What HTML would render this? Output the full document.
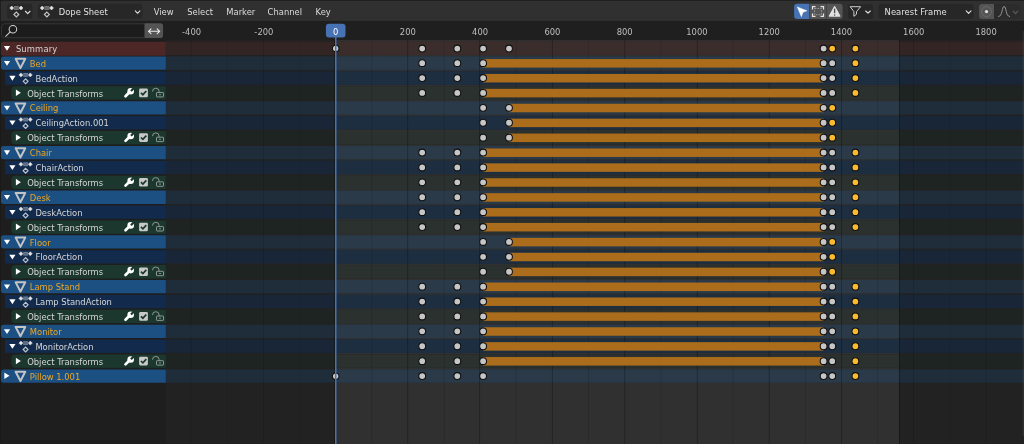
<!DOCTYPE html>
<html lang="en"><head><meta charset="utf-8"><title>Dope Sheet</title>
<style>html,body{margin:0;padding:0;background:#222;overflow:hidden}svg{display:block;will-change:transform}text{white-space:pre}</style></head>
<body>
<svg width="1024" height="444" viewBox="0 0 1024 444" font-family='"DejaVu Sans","Liberation Sans",sans-serif'>
<rect x="0.00" y="0.00" width="1024.00" height="444.00" fill="#222222" />
<rect x="335.60" y="40.00" width="563.40" height="404.00" fill="#303030" />
<rect x="0.00" y="40.00" width="165.80" height="404.00" fill="#1e1e1e" />
<rect x="165.80" y="41.60" width="858.20" height="13.30" fill="#342525" />
<rect x="335.60" y="41.60" width="563.40" height="13.30" fill="#3c2d2d" />
<rect x="165.80" y="56.50" width="858.20" height="13.30" fill="#1f2d3b" />
<rect x="335.60" y="56.50" width="563.40" height="13.30" fill="#2a3a49" />
<rect x="165.80" y="71.40" width="858.20" height="13.30" fill="#182638" />
<rect x="335.60" y="71.40" width="563.40" height="13.30" fill="#1e2e41" />
<rect x="165.80" y="86.30" width="858.20" height="13.30" fill="#1e2422" />
<rect x="335.60" y="86.30" width="563.40" height="13.30" fill="#2b312f" />
<rect x="165.80" y="101.20" width="858.20" height="13.30" fill="#1f2d3b" />
<rect x="335.60" y="101.20" width="563.40" height="13.30" fill="#2a3a49" />
<rect x="165.80" y="116.10" width="858.20" height="13.30" fill="#182638" />
<rect x="335.60" y="116.10" width="563.40" height="13.30" fill="#1e2e41" />
<rect x="165.80" y="131.00" width="858.20" height="13.30" fill="#1e2422" />
<rect x="335.60" y="131.00" width="563.40" height="13.30" fill="#2b312f" />
<rect x="165.80" y="145.90" width="858.20" height="13.30" fill="#1f2d3b" />
<rect x="335.60" y="145.90" width="563.40" height="13.30" fill="#2a3a49" />
<rect x="165.80" y="160.80" width="858.20" height="13.30" fill="#182638" />
<rect x="335.60" y="160.80" width="563.40" height="13.30" fill="#1e2e41" />
<rect x="165.80" y="175.70" width="858.20" height="13.30" fill="#1e2422" />
<rect x="335.60" y="175.70" width="563.40" height="13.30" fill="#2b312f" />
<rect x="165.80" y="190.60" width="858.20" height="13.30" fill="#1f2d3b" />
<rect x="335.60" y="190.60" width="563.40" height="13.30" fill="#2a3a49" />
<rect x="165.80" y="205.50" width="858.20" height="13.30" fill="#182638" />
<rect x="335.60" y="205.50" width="563.40" height="13.30" fill="#1e2e41" />
<rect x="165.80" y="220.40" width="858.20" height="13.30" fill="#1e2422" />
<rect x="335.60" y="220.40" width="563.40" height="13.30" fill="#2b312f" />
<rect x="165.80" y="235.30" width="858.20" height="13.30" fill="#1f2d3b" />
<rect x="335.60" y="235.30" width="563.40" height="13.30" fill="#2a3a49" />
<rect x="165.80" y="250.20" width="858.20" height="13.30" fill="#182638" />
<rect x="335.60" y="250.20" width="563.40" height="13.30" fill="#1e2e41" />
<rect x="165.80" y="265.10" width="858.20" height="13.30" fill="#1e2422" />
<rect x="335.60" y="265.10" width="563.40" height="13.30" fill="#2b312f" />
<rect x="165.80" y="280.00" width="858.20" height="13.30" fill="#1f2d3b" />
<rect x="335.60" y="280.00" width="563.40" height="13.30" fill="#2a3a49" />
<rect x="165.80" y="294.90" width="858.20" height="13.30" fill="#182638" />
<rect x="335.60" y="294.90" width="563.40" height="13.30" fill="#1e2e41" />
<rect x="165.80" y="309.80" width="858.20" height="13.30" fill="#1e2422" />
<rect x="335.60" y="309.80" width="563.40" height="13.30" fill="#2b312f" />
<rect x="165.80" y="324.70" width="858.20" height="13.30" fill="#1f2d3b" />
<rect x="335.60" y="324.70" width="563.40" height="13.30" fill="#2a3a49" />
<rect x="165.80" y="339.60" width="858.20" height="13.30" fill="#182638" />
<rect x="335.60" y="339.60" width="563.40" height="13.30" fill="#1e2e41" />
<rect x="165.80" y="354.50" width="858.20" height="13.30" fill="#1e2422" />
<rect x="335.60" y="354.50" width="563.40" height="13.30" fill="#2b312f" />
<rect x="165.80" y="369.40" width="858.20" height="13.30" fill="#1f2d3b" />
<rect x="335.60" y="369.40" width="563.40" height="13.30" fill="#2a3a49" />
<line x1="334.5" y1="40.0" x2="334.5" y2="444" stroke="#000" stroke-opacity="0.3" stroke-width="1"/>
<line x1="191.00" y1="40.0" x2="191.00" y2="444" stroke="#000" stroke-opacity="0.12150000000000001" stroke-width="1"/>
<line x1="227.30" y1="40.0" x2="227.30" y2="444" stroke="#000" stroke-opacity="0.0495" stroke-width="1"/>
<line x1="263.60" y1="40.0" x2="263.60" y2="444" stroke="#000" stroke-opacity="0.12150000000000001" stroke-width="1"/>
<line x1="299.60" y1="40.0" x2="299.60" y2="444" stroke="#000" stroke-opacity="0.0495" stroke-width="1"/>
<line x1="371.70" y1="40.0" x2="371.70" y2="444" stroke="#000" stroke-opacity="0.11" stroke-width="1"/>
<line x1="407.70" y1="40.0" x2="407.70" y2="444" stroke="#000" stroke-opacity="0.27" stroke-width="1"/>
<line x1="444.30" y1="40.0" x2="444.30" y2="444" stroke="#000" stroke-opacity="0.11" stroke-width="1"/>
<line x1="479.60" y1="40.0" x2="479.60" y2="444" stroke="#000" stroke-opacity="0.27" stroke-width="1"/>
<line x1="516.25" y1="40.0" x2="516.25" y2="444" stroke="#000" stroke-opacity="0.11" stroke-width="1"/>
<line x1="552.39" y1="40.0" x2="552.39" y2="444" stroke="#000" stroke-opacity="0.27" stroke-width="1"/>
<line x1="588.53" y1="40.0" x2="588.53" y2="444" stroke="#000" stroke-opacity="0.11" stroke-width="1"/>
<line x1="624.67" y1="40.0" x2="624.67" y2="444" stroke="#000" stroke-opacity="0.27" stroke-width="1"/>
<line x1="660.81" y1="40.0" x2="660.81" y2="444" stroke="#000" stroke-opacity="0.11" stroke-width="1"/>
<line x1="697.40" y1="40.0" x2="697.40" y2="444" stroke="#000" stroke-opacity="0.27" stroke-width="1"/>
<line x1="733.09" y1="40.0" x2="733.09" y2="444" stroke="#000" stroke-opacity="0.11" stroke-width="1"/>
<line x1="769.23" y1="40.0" x2="769.23" y2="444" stroke="#000" stroke-opacity="0.27" stroke-width="1"/>
<line x1="805.37" y1="40.0" x2="805.37" y2="444" stroke="#000" stroke-opacity="0.11" stroke-width="1"/>
<line x1="841.50" y1="40.0" x2="841.50" y2="444" stroke="#000" stroke-opacity="0.27" stroke-width="1"/>
<line x1="877.64" y1="40.0" x2="877.64" y2="444" stroke="#000" stroke-opacity="0.11" stroke-width="1"/>
<line x1="913.50" y1="40.0" x2="913.50" y2="444" stroke="#000" stroke-opacity="0.12150000000000001" stroke-width="1"/>
<line x1="949.92" y1="40.0" x2="949.92" y2="444" stroke="#000" stroke-opacity="0.0495" stroke-width="1"/>
<line x1="986.06" y1="40.0" x2="986.06" y2="444" stroke="#000" stroke-opacity="0.12150000000000001" stroke-width="1"/>
<line x1="1022.20" y1="40.0" x2="1022.20" y2="444" stroke="#000" stroke-opacity="0.0495" stroke-width="1"/>
<line x1="899.5" y1="40.0" x2="899.5" y2="444" stroke="#000" stroke-opacity="0.32" stroke-width="1"/>
<circle cx="335.70" cy="48.45" r="3.25" fill="#c6c6c6" stroke="#0f0f0f" stroke-width="1.05"/>
<circle cx="422.20" cy="48.55" r="3.42" fill="#c6c6c6" stroke="#0f0f0f" stroke-width="1.05"/>
<circle cx="457.30" cy="48.55" r="3.42" fill="#c6c6c6" stroke="#0f0f0f" stroke-width="1.05"/>
<circle cx="483.10" cy="48.55" r="3.42" fill="#c6c6c6" stroke="#0f0f0f" stroke-width="1.05"/>
<circle cx="509.00" cy="48.55" r="3.42" fill="#c6c6c6" stroke="#0f0f0f" stroke-width="1.05"/>
<circle cx="823.60" cy="48.55" r="3.42" fill="#c6c6c6" stroke="#0f0f0f" stroke-width="1.05"/>
<circle cx="832.25" cy="48.55" r="3.42" fill="#fbbb2f" stroke="#0f0f0f" stroke-width="1.05"/>
<circle cx="855.40" cy="48.55" r="3.42" fill="#fbbb2f" stroke="#0f0f0f" stroke-width="1.05"/>
<rect x="483.10" y="59.05" width="340.50" height="8.50" fill="#ab6d1b" />
<circle cx="422.20" cy="63.15" r="3.42" fill="#c6c6c6" stroke="#0f0f0f" stroke-width="1.05"/>
<circle cx="457.30" cy="63.15" r="3.42" fill="#c6c6c6" stroke="#0f0f0f" stroke-width="1.05"/>
<circle cx="483.10" cy="63.15" r="3.42" fill="#c6c6c6" stroke="#0f0f0f" stroke-width="1.05"/>
<circle cx="823.60" cy="63.15" r="3.42" fill="#c6c6c6" stroke="#0f0f0f" stroke-width="1.05"/>
<circle cx="832.25" cy="63.15" r="3.42" fill="#c6c6c6" stroke="#0f0f0f" stroke-width="1.05"/>
<circle cx="855.40" cy="63.15" r="3.42" fill="#fbbb2f" stroke="#0f0f0f" stroke-width="1.05"/>
<rect x="483.10" y="73.95" width="340.50" height="8.50" fill="#ab6d1b" />
<circle cx="422.20" cy="78.05" r="3.42" fill="#c6c6c6" stroke="#0f0f0f" stroke-width="1.05"/>
<circle cx="457.30" cy="78.05" r="3.42" fill="#c6c6c6" stroke="#0f0f0f" stroke-width="1.05"/>
<circle cx="483.10" cy="78.05" r="3.42" fill="#c6c6c6" stroke="#0f0f0f" stroke-width="1.05"/>
<circle cx="823.60" cy="78.05" r="3.42" fill="#c6c6c6" stroke="#0f0f0f" stroke-width="1.05"/>
<circle cx="832.25" cy="78.05" r="3.42" fill="#c6c6c6" stroke="#0f0f0f" stroke-width="1.05"/>
<circle cx="855.40" cy="78.05" r="3.42" fill="#fbbb2f" stroke="#0f0f0f" stroke-width="1.05"/>
<rect x="483.10" y="88.85" width="340.50" height="8.50" fill="#ab6d1b" />
<circle cx="422.20" cy="92.95" r="3.42" fill="#c6c6c6" stroke="#0f0f0f" stroke-width="1.05"/>
<circle cx="457.30" cy="92.95" r="3.42" fill="#c6c6c6" stroke="#0f0f0f" stroke-width="1.05"/>
<circle cx="483.10" cy="92.95" r="3.42" fill="#c6c6c6" stroke="#0f0f0f" stroke-width="1.05"/>
<circle cx="823.60" cy="92.95" r="3.42" fill="#c6c6c6" stroke="#0f0f0f" stroke-width="1.05"/>
<circle cx="832.25" cy="92.95" r="3.42" fill="#c6c6c6" stroke="#0f0f0f" stroke-width="1.05"/>
<circle cx="855.40" cy="92.95" r="3.42" fill="#fbbb2f" stroke="#0f0f0f" stroke-width="1.05"/>
<rect x="509.00" y="103.75" width="314.60" height="8.50" fill="#ab6d1b" />
<circle cx="483.10" cy="107.85" r="3.42" fill="#c6c6c6" stroke="#0f0f0f" stroke-width="1.05"/>
<circle cx="509.00" cy="107.85" r="3.42" fill="#c6c6c6" stroke="#0f0f0f" stroke-width="1.05"/>
<circle cx="823.60" cy="107.85" r="3.42" fill="#c6c6c6" stroke="#0f0f0f" stroke-width="1.05"/>
<circle cx="832.25" cy="107.85" r="3.42" fill="#fbbb2f" stroke="#0f0f0f" stroke-width="1.05"/>
<rect x="509.00" y="118.65" width="314.60" height="8.50" fill="#ab6d1b" />
<circle cx="483.10" cy="122.75" r="3.42" fill="#c6c6c6" stroke="#0f0f0f" stroke-width="1.05"/>
<circle cx="509.00" cy="122.75" r="3.42" fill="#c6c6c6" stroke="#0f0f0f" stroke-width="1.05"/>
<circle cx="823.60" cy="122.75" r="3.42" fill="#c6c6c6" stroke="#0f0f0f" stroke-width="1.05"/>
<circle cx="832.25" cy="122.75" r="3.42" fill="#fbbb2f" stroke="#0f0f0f" stroke-width="1.05"/>
<rect x="509.00" y="133.55" width="314.60" height="8.50" fill="#ab6d1b" />
<circle cx="483.10" cy="137.65" r="3.42" fill="#c6c6c6" stroke="#0f0f0f" stroke-width="1.05"/>
<circle cx="509.00" cy="137.65" r="3.42" fill="#c6c6c6" stroke="#0f0f0f" stroke-width="1.05"/>
<circle cx="823.60" cy="137.65" r="3.42" fill="#c6c6c6" stroke="#0f0f0f" stroke-width="1.05"/>
<circle cx="832.25" cy="137.65" r="3.42" fill="#fbbb2f" stroke="#0f0f0f" stroke-width="1.05"/>
<rect x="483.10" y="148.45" width="340.50" height="8.50" fill="#ab6d1b" />
<circle cx="422.20" cy="152.55" r="3.42" fill="#c6c6c6" stroke="#0f0f0f" stroke-width="1.05"/>
<circle cx="457.30" cy="152.55" r="3.42" fill="#c6c6c6" stroke="#0f0f0f" stroke-width="1.05"/>
<circle cx="483.10" cy="152.55" r="3.42" fill="#c6c6c6" stroke="#0f0f0f" stroke-width="1.05"/>
<circle cx="823.60" cy="152.55" r="3.42" fill="#c6c6c6" stroke="#0f0f0f" stroke-width="1.05"/>
<circle cx="832.25" cy="152.55" r="3.42" fill="#c6c6c6" stroke="#0f0f0f" stroke-width="1.05"/>
<circle cx="855.40" cy="152.55" r="3.42" fill="#fbbb2f" stroke="#0f0f0f" stroke-width="1.05"/>
<rect x="483.10" y="163.35" width="340.50" height="8.50" fill="#ab6d1b" />
<circle cx="422.20" cy="167.45" r="3.42" fill="#c6c6c6" stroke="#0f0f0f" stroke-width="1.05"/>
<circle cx="457.30" cy="167.45" r="3.42" fill="#c6c6c6" stroke="#0f0f0f" stroke-width="1.05"/>
<circle cx="483.10" cy="167.45" r="3.42" fill="#c6c6c6" stroke="#0f0f0f" stroke-width="1.05"/>
<circle cx="823.60" cy="167.45" r="3.42" fill="#c6c6c6" stroke="#0f0f0f" stroke-width="1.05"/>
<circle cx="832.25" cy="167.45" r="3.42" fill="#c6c6c6" stroke="#0f0f0f" stroke-width="1.05"/>
<circle cx="855.40" cy="167.45" r="3.42" fill="#fbbb2f" stroke="#0f0f0f" stroke-width="1.05"/>
<rect x="483.10" y="178.25" width="340.50" height="8.50" fill="#ab6d1b" />
<circle cx="422.20" cy="182.35" r="3.42" fill="#c6c6c6" stroke="#0f0f0f" stroke-width="1.05"/>
<circle cx="457.30" cy="182.35" r="3.42" fill="#c6c6c6" stroke="#0f0f0f" stroke-width="1.05"/>
<circle cx="483.10" cy="182.35" r="3.42" fill="#c6c6c6" stroke="#0f0f0f" stroke-width="1.05"/>
<circle cx="823.60" cy="182.35" r="3.42" fill="#c6c6c6" stroke="#0f0f0f" stroke-width="1.05"/>
<circle cx="832.25" cy="182.35" r="3.42" fill="#c6c6c6" stroke="#0f0f0f" stroke-width="1.05"/>
<circle cx="855.40" cy="182.35" r="3.42" fill="#fbbb2f" stroke="#0f0f0f" stroke-width="1.05"/>
<rect x="483.10" y="193.15" width="340.50" height="8.50" fill="#ab6d1b" />
<circle cx="422.20" cy="197.25" r="3.42" fill="#c6c6c6" stroke="#0f0f0f" stroke-width="1.05"/>
<circle cx="457.30" cy="197.25" r="3.42" fill="#c6c6c6" stroke="#0f0f0f" stroke-width="1.05"/>
<circle cx="483.10" cy="197.25" r="3.42" fill="#c6c6c6" stroke="#0f0f0f" stroke-width="1.05"/>
<circle cx="823.60" cy="197.25" r="3.42" fill="#c6c6c6" stroke="#0f0f0f" stroke-width="1.05"/>
<circle cx="832.25" cy="197.25" r="3.42" fill="#c6c6c6" stroke="#0f0f0f" stroke-width="1.05"/>
<circle cx="855.40" cy="197.25" r="3.42" fill="#fbbb2f" stroke="#0f0f0f" stroke-width="1.05"/>
<rect x="483.10" y="208.05" width="340.50" height="8.50" fill="#ab6d1b" />
<circle cx="422.20" cy="212.15" r="3.42" fill="#c6c6c6" stroke="#0f0f0f" stroke-width="1.05"/>
<circle cx="457.30" cy="212.15" r="3.42" fill="#c6c6c6" stroke="#0f0f0f" stroke-width="1.05"/>
<circle cx="483.10" cy="212.15" r="3.42" fill="#c6c6c6" stroke="#0f0f0f" stroke-width="1.05"/>
<circle cx="823.60" cy="212.15" r="3.42" fill="#c6c6c6" stroke="#0f0f0f" stroke-width="1.05"/>
<circle cx="832.25" cy="212.15" r="3.42" fill="#c6c6c6" stroke="#0f0f0f" stroke-width="1.05"/>
<circle cx="855.40" cy="212.15" r="3.42" fill="#fbbb2f" stroke="#0f0f0f" stroke-width="1.05"/>
<rect x="483.10" y="222.95" width="340.50" height="8.50" fill="#ab6d1b" />
<circle cx="422.20" cy="227.05" r="3.42" fill="#c6c6c6" stroke="#0f0f0f" stroke-width="1.05"/>
<circle cx="457.30" cy="227.05" r="3.42" fill="#c6c6c6" stroke="#0f0f0f" stroke-width="1.05"/>
<circle cx="483.10" cy="227.05" r="3.42" fill="#c6c6c6" stroke="#0f0f0f" stroke-width="1.05"/>
<circle cx="823.60" cy="227.05" r="3.42" fill="#c6c6c6" stroke="#0f0f0f" stroke-width="1.05"/>
<circle cx="832.25" cy="227.05" r="3.42" fill="#c6c6c6" stroke="#0f0f0f" stroke-width="1.05"/>
<circle cx="855.40" cy="227.05" r="3.42" fill="#fbbb2f" stroke="#0f0f0f" stroke-width="1.05"/>
<rect x="509.00" y="237.85" width="314.60" height="8.50" fill="#ab6d1b" />
<circle cx="483.10" cy="241.95" r="3.42" fill="#c6c6c6" stroke="#0f0f0f" stroke-width="1.05"/>
<circle cx="509.00" cy="241.95" r="3.42" fill="#c6c6c6" stroke="#0f0f0f" stroke-width="1.05"/>
<circle cx="823.60" cy="241.95" r="3.42" fill="#c6c6c6" stroke="#0f0f0f" stroke-width="1.05"/>
<circle cx="832.25" cy="241.95" r="3.42" fill="#fbbb2f" stroke="#0f0f0f" stroke-width="1.05"/>
<rect x="509.00" y="252.75" width="314.60" height="8.50" fill="#ab6d1b" />
<circle cx="483.10" cy="256.85" r="3.42" fill="#c6c6c6" stroke="#0f0f0f" stroke-width="1.05"/>
<circle cx="509.00" cy="256.85" r="3.42" fill="#c6c6c6" stroke="#0f0f0f" stroke-width="1.05"/>
<circle cx="823.60" cy="256.85" r="3.42" fill="#c6c6c6" stroke="#0f0f0f" stroke-width="1.05"/>
<circle cx="832.25" cy="256.85" r="3.42" fill="#fbbb2f" stroke="#0f0f0f" stroke-width="1.05"/>
<rect x="509.00" y="267.65" width="314.60" height="8.50" fill="#ab6d1b" />
<circle cx="483.10" cy="271.75" r="3.42" fill="#c6c6c6" stroke="#0f0f0f" stroke-width="1.05"/>
<circle cx="509.00" cy="271.75" r="3.42" fill="#c6c6c6" stroke="#0f0f0f" stroke-width="1.05"/>
<circle cx="823.60" cy="271.75" r="3.42" fill="#c6c6c6" stroke="#0f0f0f" stroke-width="1.05"/>
<circle cx="832.25" cy="271.75" r="3.42" fill="#fbbb2f" stroke="#0f0f0f" stroke-width="1.05"/>
<rect x="483.10" y="282.55" width="340.50" height="8.50" fill="#ab6d1b" />
<circle cx="422.20" cy="286.65" r="3.42" fill="#c6c6c6" stroke="#0f0f0f" stroke-width="1.05"/>
<circle cx="457.30" cy="286.65" r="3.42" fill="#c6c6c6" stroke="#0f0f0f" stroke-width="1.05"/>
<circle cx="483.10" cy="286.65" r="3.42" fill="#c6c6c6" stroke="#0f0f0f" stroke-width="1.05"/>
<circle cx="823.60" cy="286.65" r="3.42" fill="#c6c6c6" stroke="#0f0f0f" stroke-width="1.05"/>
<circle cx="832.25" cy="286.65" r="3.42" fill="#c6c6c6" stroke="#0f0f0f" stroke-width="1.05"/>
<circle cx="855.40" cy="286.65" r="3.42" fill="#fbbb2f" stroke="#0f0f0f" stroke-width="1.05"/>
<rect x="483.10" y="297.45" width="340.50" height="8.50" fill="#ab6d1b" />
<circle cx="422.20" cy="301.55" r="3.42" fill="#c6c6c6" stroke="#0f0f0f" stroke-width="1.05"/>
<circle cx="457.30" cy="301.55" r="3.42" fill="#c6c6c6" stroke="#0f0f0f" stroke-width="1.05"/>
<circle cx="483.10" cy="301.55" r="3.42" fill="#c6c6c6" stroke="#0f0f0f" stroke-width="1.05"/>
<circle cx="823.60" cy="301.55" r="3.42" fill="#c6c6c6" stroke="#0f0f0f" stroke-width="1.05"/>
<circle cx="832.25" cy="301.55" r="3.42" fill="#c6c6c6" stroke="#0f0f0f" stroke-width="1.05"/>
<circle cx="855.40" cy="301.55" r="3.42" fill="#fbbb2f" stroke="#0f0f0f" stroke-width="1.05"/>
<rect x="483.10" y="312.35" width="340.50" height="8.50" fill="#ab6d1b" />
<circle cx="422.20" cy="316.45" r="3.42" fill="#c6c6c6" stroke="#0f0f0f" stroke-width="1.05"/>
<circle cx="457.30" cy="316.45" r="3.42" fill="#c6c6c6" stroke="#0f0f0f" stroke-width="1.05"/>
<circle cx="483.10" cy="316.45" r="3.42" fill="#c6c6c6" stroke="#0f0f0f" stroke-width="1.05"/>
<circle cx="823.60" cy="316.45" r="3.42" fill="#c6c6c6" stroke="#0f0f0f" stroke-width="1.05"/>
<circle cx="832.25" cy="316.45" r="3.42" fill="#c6c6c6" stroke="#0f0f0f" stroke-width="1.05"/>
<circle cx="855.40" cy="316.45" r="3.42" fill="#fbbb2f" stroke="#0f0f0f" stroke-width="1.05"/>
<rect x="483.10" y="327.25" width="340.50" height="8.50" fill="#ab6d1b" />
<circle cx="422.20" cy="331.35" r="3.42" fill="#c6c6c6" stroke="#0f0f0f" stroke-width="1.05"/>
<circle cx="457.30" cy="331.35" r="3.42" fill="#c6c6c6" stroke="#0f0f0f" stroke-width="1.05"/>
<circle cx="483.10" cy="331.35" r="3.42" fill="#c6c6c6" stroke="#0f0f0f" stroke-width="1.05"/>
<circle cx="823.60" cy="331.35" r="3.42" fill="#c6c6c6" stroke="#0f0f0f" stroke-width="1.05"/>
<circle cx="832.25" cy="331.35" r="3.42" fill="#c6c6c6" stroke="#0f0f0f" stroke-width="1.05"/>
<circle cx="855.40" cy="331.35" r="3.42" fill="#fbbb2f" stroke="#0f0f0f" stroke-width="1.05"/>
<rect x="483.10" y="342.15" width="340.50" height="8.50" fill="#ab6d1b" />
<circle cx="422.20" cy="346.25" r="3.42" fill="#c6c6c6" stroke="#0f0f0f" stroke-width="1.05"/>
<circle cx="457.30" cy="346.25" r="3.42" fill="#c6c6c6" stroke="#0f0f0f" stroke-width="1.05"/>
<circle cx="483.10" cy="346.25" r="3.42" fill="#c6c6c6" stroke="#0f0f0f" stroke-width="1.05"/>
<circle cx="823.60" cy="346.25" r="3.42" fill="#c6c6c6" stroke="#0f0f0f" stroke-width="1.05"/>
<circle cx="832.25" cy="346.25" r="3.42" fill="#c6c6c6" stroke="#0f0f0f" stroke-width="1.05"/>
<circle cx="855.40" cy="346.25" r="3.42" fill="#fbbb2f" stroke="#0f0f0f" stroke-width="1.05"/>
<rect x="483.10" y="357.05" width="340.50" height="8.50" fill="#ab6d1b" />
<circle cx="422.20" cy="361.15" r="3.42" fill="#c6c6c6" stroke="#0f0f0f" stroke-width="1.05"/>
<circle cx="457.30" cy="361.15" r="3.42" fill="#c6c6c6" stroke="#0f0f0f" stroke-width="1.05"/>
<circle cx="483.10" cy="361.15" r="3.42" fill="#c6c6c6" stroke="#0f0f0f" stroke-width="1.05"/>
<circle cx="823.60" cy="361.15" r="3.42" fill="#c6c6c6" stroke="#0f0f0f" stroke-width="1.05"/>
<circle cx="832.25" cy="361.15" r="3.42" fill="#c6c6c6" stroke="#0f0f0f" stroke-width="1.05"/>
<circle cx="855.40" cy="361.15" r="3.42" fill="#fbbb2f" stroke="#0f0f0f" stroke-width="1.05"/>
<circle cx="335.70" cy="376.25" r="3.25" fill="#c6c6c6" stroke="#0f0f0f" stroke-width="1.05"/>
<circle cx="422.20" cy="376.05" r="3.42" fill="#c6c6c6" stroke="#0f0f0f" stroke-width="1.05"/>
<circle cx="457.30" cy="376.05" r="3.42" fill="#c6c6c6" stroke="#0f0f0f" stroke-width="1.05"/>
<circle cx="483.10" cy="376.05" r="3.42" fill="#c6c6c6" stroke="#0f0f0f" stroke-width="1.05"/>
<circle cx="823.60" cy="376.05" r="3.42" fill="#c6c6c6" stroke="#0f0f0f" stroke-width="1.05"/>
<circle cx="832.25" cy="376.05" r="3.42" fill="#c6c6c6" stroke="#0f0f0f" stroke-width="1.05"/>
<circle cx="855.40" cy="376.05" r="3.42" fill="#fbbb2f" stroke="#0f0f0f" stroke-width="1.05"/>
<rect x="0.00" y="20.90" width="1024.00" height="19.10" fill="#1f1f1f" />
<text x="191.60" y="34.90" fill="#bebebe" font-size="8.4" text-anchor="middle" >-400</text>
<text x="263.88" y="34.90" fill="#bebebe" font-size="8.4" text-anchor="middle" >-200</text>
<text x="407.84" y="34.90" fill="#bebebe" font-size="8.4" text-anchor="middle" >200</text>
<text x="480.12" y="34.90" fill="#bebebe" font-size="8.4" text-anchor="middle" >400</text>
<text x="552.39" y="34.90" fill="#bebebe" font-size="8.4" text-anchor="middle" >600</text>
<text x="624.67" y="34.90" fill="#bebebe" font-size="8.4" text-anchor="middle" >800</text>
<text x="696.95" y="34.90" fill="#bebebe" font-size="8.4" text-anchor="middle" >1000</text>
<text x="769.23" y="34.90" fill="#bebebe" font-size="8.4" text-anchor="middle" >1200</text>
<text x="841.51" y="34.90" fill="#bebebe" font-size="8.4" text-anchor="middle" >1400</text>
<text x="913.78" y="34.90" fill="#bebebe" font-size="8.4" text-anchor="middle" >1600</text>
<text x="986.06" y="34.90" fill="#bebebe" font-size="8.4" text-anchor="middle" >1800</text>
<rect x="335.0" y="30" width="1.5" height="414" fill="#4772b3"/>
<rect x="325.90" y="23.7" width="19.6" height="13.8" rx="3" fill="#4772b3"/>
<text x="335.70" y="34.70" fill="#ffffff" font-size="8.4" text-anchor="middle" >0</text>
<path d="M3.80 41.70H165.80V55.70H3.80A3 3 0 0 1 0.80 52.70V44.70A3 3 0 0 1 3.80 41.70Z" fill="#4d2626"/>
<path d="M3.90 46.05H10.10L7.00 50.85Z" fill="#ffffff"/>
<text x="15.90" y="52.15" fill="#d6d6d6" font-size="8.4" text-anchor="start" textLength="41.3" lengthAdjust="spacing">Summary</text>
<path d="M3.80 56.50H165.80V69.80H3.80A3 3 0 0 1 0.80 66.80V59.50A3 3 0 0 1 3.80 56.50Z" fill="#1c4f82"/>
<path d="M3.90 60.95H10.10L7.00 65.75Z" fill="#ffffff"/>
<path d="M15.65 58.80H25.25L20.45 68.10Z" fill="none" stroke="#c4c4c4" stroke-width="2.0" stroke-linejoin="round"/>
<text x="29.80" y="66.75" fill="#eda721" font-size="8.4" text-anchor="start" >Bed</text>
<rect x="5.10" y="71.40" width="160.70" height="13.30" fill="#122b4d" />
<path d="M9.30 75.85H15.50L12.40 80.65Z" fill="#ffffff"/>
<path d="M18.95 74.90L20.95 72.90L22.95 74.90L20.95 76.90Z" fill="#e4e4e4" stroke="#e4e4e4" stroke-width="0.5" stroke-linejoin="round"/>
<path d="M28.25 74.90L30.25 72.90L32.25 74.90L30.25 76.90Z" fill="#e4e4e4" stroke="#e4e4e4" stroke-width="0.5" stroke-linejoin="round"/>
<rect x="23.20" y="73.10" width="4.80" height="3.60" fill="#ffffff" fill-opacity="0.3"/>
<rect x="23.20" y="73.10" width="4.80" height="0.70" fill="#ffffff" fill-opacity="0.22"/>
<rect x="23.20" y="76.00" width="4.80" height="0.70" fill="#ffffff" fill-opacity="0.22"/>
<path d="M23.20 81.30L25.60 78.90L28.00 81.30L25.60 83.70Z" fill="none" stroke="#ffffff" stroke-opacity="0.72" stroke-width="1.20"/>
<text x="35.40" y="81.65" fill="#d6d6d6" font-size="8.4" text-anchor="start" >BedAction</text>
<path d="M15.30 86.30H165.80V99.60H15.30A4 4 0 0 1 11.30 95.60V90.30A4 4 0 0 1 15.30 86.30Z" fill="#1c382e"/>
<path d="M15.85 89.45L20.85 92.75L15.85 96.05Z" fill="#ffffff"/>
<text x="27.20" y="96.55" fill="#d6d6d6" font-size="8.4" text-anchor="start" >Object Transforms</text>
<g transform="translate(123.90 87.90)"><path d="M1.6 8.3L6.0 3.9" stroke="#ffffff" stroke-width="2.7" stroke-linecap="round" fill="none"/><circle cx="6.8" cy="3.4" r="3.3" fill="#ffffff"/><rect x="-1.1" y="-4.6" width="2.2" height="4.4" fill="#1c382e" transform="translate(6.9 3.3) rotate(45)"/></g>
<rect x="139.10" y="88.60" width="8.8" height="8.6" rx="1.3" fill="#c9c9c9"/>
<path d="M140.90 92.80L142.90 94.70L146.30 91.00" fill="none" stroke="#1c382e" stroke-width="1.7"/>
<path d="M152.50 91.50A3.3 3.3 0 0 1 159.10 91.50V92.50" fill="none" stroke="#98a39d" stroke-width="0.9"/>
<rect x="156.50" y="92.50" width="7.0" height="4.4" rx="0.6" fill="none" stroke="#98a39d" stroke-width="0.9"/>
<path d="M159.00 94.70H161.00" stroke="#98a39d" stroke-width="0.8"/>
<path d="M3.80 101.20H165.80V114.50H3.80A3 3 0 0 1 0.80 111.50V104.20A3 3 0 0 1 3.80 101.20Z" fill="#1c4f82"/>
<path d="M3.90 105.65H10.10L7.00 110.45Z" fill="#ffffff"/>
<path d="M15.65 103.50H25.25L20.45 112.80Z" fill="none" stroke="#c4c4c4" stroke-width="2.0" stroke-linejoin="round"/>
<text x="29.80" y="111.45" fill="#eda721" font-size="8.4" text-anchor="start" >Ceiling</text>
<rect x="5.10" y="116.10" width="160.70" height="13.30" fill="#122b4d" />
<path d="M9.30 120.55H15.50L12.40 125.35Z" fill="#ffffff"/>
<path d="M18.95 119.60L20.95 117.60L22.95 119.60L20.95 121.60Z" fill="#e4e4e4" stroke="#e4e4e4" stroke-width="0.5" stroke-linejoin="round"/>
<path d="M28.25 119.60L30.25 117.60L32.25 119.60L30.25 121.60Z" fill="#e4e4e4" stroke="#e4e4e4" stroke-width="0.5" stroke-linejoin="round"/>
<rect x="23.20" y="117.80" width="4.80" height="3.60" fill="#ffffff" fill-opacity="0.3"/>
<rect x="23.20" y="117.80" width="4.80" height="0.70" fill="#ffffff" fill-opacity="0.22"/>
<rect x="23.20" y="120.70" width="4.80" height="0.70" fill="#ffffff" fill-opacity="0.22"/>
<path d="M23.20 126.00L25.60 123.60L28.00 126.00L25.60 128.40Z" fill="none" stroke="#ffffff" stroke-opacity="0.72" stroke-width="1.20"/>
<text x="35.40" y="126.35" fill="#d6d6d6" font-size="8.4" text-anchor="start" >CeilingAction.001</text>
<path d="M15.30 131.00H165.80V144.30H15.30A4 4 0 0 1 11.30 140.30V135.00A4 4 0 0 1 15.30 131.00Z" fill="#1c382e"/>
<path d="M15.85 134.15L20.85 137.45L15.85 140.75Z" fill="#ffffff"/>
<text x="27.20" y="141.25" fill="#d6d6d6" font-size="8.4" text-anchor="start" >Object Transforms</text>
<g transform="translate(123.90 132.60)"><path d="M1.6 8.3L6.0 3.9" stroke="#ffffff" stroke-width="2.7" stroke-linecap="round" fill="none"/><circle cx="6.8" cy="3.4" r="3.3" fill="#ffffff"/><rect x="-1.1" y="-4.6" width="2.2" height="4.4" fill="#1c382e" transform="translate(6.9 3.3) rotate(45)"/></g>
<rect x="139.10" y="133.30" width="8.8" height="8.6" rx="1.3" fill="#c9c9c9"/>
<path d="M140.90 137.50L142.90 139.40L146.30 135.70" fill="none" stroke="#1c382e" stroke-width="1.7"/>
<path d="M152.50 136.20A3.3 3.3 0 0 1 159.10 136.20V137.20" fill="none" stroke="#98a39d" stroke-width="0.9"/>
<rect x="156.50" y="137.20" width="7.0" height="4.4" rx="0.6" fill="none" stroke="#98a39d" stroke-width="0.9"/>
<path d="M159.00 139.40H161.00" stroke="#98a39d" stroke-width="0.8"/>
<path d="M3.80 145.90H165.80V159.20H3.80A3 3 0 0 1 0.80 156.20V148.90A3 3 0 0 1 3.80 145.90Z" fill="#1c4f82"/>
<path d="M3.90 150.35H10.10L7.00 155.15Z" fill="#ffffff"/>
<path d="M15.65 148.20H25.25L20.45 157.50Z" fill="none" stroke="#c4c4c4" stroke-width="2.0" stroke-linejoin="round"/>
<text x="29.80" y="156.15" fill="#eda721" font-size="8.4" text-anchor="start" >Chair</text>
<rect x="5.10" y="160.80" width="160.70" height="13.30" fill="#122b4d" />
<path d="M9.30 165.25H15.50L12.40 170.05Z" fill="#ffffff"/>
<path d="M18.95 164.30L20.95 162.30L22.95 164.30L20.95 166.30Z" fill="#e4e4e4" stroke="#e4e4e4" stroke-width="0.5" stroke-linejoin="round"/>
<path d="M28.25 164.30L30.25 162.30L32.25 164.30L30.25 166.30Z" fill="#e4e4e4" stroke="#e4e4e4" stroke-width="0.5" stroke-linejoin="round"/>
<rect x="23.20" y="162.50" width="4.80" height="3.60" fill="#ffffff" fill-opacity="0.3"/>
<rect x="23.20" y="162.50" width="4.80" height="0.70" fill="#ffffff" fill-opacity="0.22"/>
<rect x="23.20" y="165.40" width="4.80" height="0.70" fill="#ffffff" fill-opacity="0.22"/>
<path d="M23.20 170.70L25.60 168.30L28.00 170.70L25.60 173.10Z" fill="none" stroke="#ffffff" stroke-opacity="0.72" stroke-width="1.20"/>
<text x="35.40" y="171.05" fill="#d6d6d6" font-size="8.4" text-anchor="start" >ChairAction</text>
<path d="M15.30 175.70H165.80V189.00H15.30A4 4 0 0 1 11.30 185.00V179.70A4 4 0 0 1 15.30 175.70Z" fill="#1c382e"/>
<path d="M15.85 178.85L20.85 182.15L15.85 185.45Z" fill="#ffffff"/>
<text x="27.20" y="185.95" fill="#d6d6d6" font-size="8.4" text-anchor="start" >Object Transforms</text>
<g transform="translate(123.90 177.30)"><path d="M1.6 8.3L6.0 3.9" stroke="#ffffff" stroke-width="2.7" stroke-linecap="round" fill="none"/><circle cx="6.8" cy="3.4" r="3.3" fill="#ffffff"/><rect x="-1.1" y="-4.6" width="2.2" height="4.4" fill="#1c382e" transform="translate(6.9 3.3) rotate(45)"/></g>
<rect x="139.10" y="178.00" width="8.8" height="8.6" rx="1.3" fill="#c9c9c9"/>
<path d="M140.90 182.20L142.90 184.10L146.30 180.40" fill="none" stroke="#1c382e" stroke-width="1.7"/>
<path d="M152.50 180.90A3.3 3.3 0 0 1 159.10 180.90V181.90" fill="none" stroke="#98a39d" stroke-width="0.9"/>
<rect x="156.50" y="181.90" width="7.0" height="4.4" rx="0.6" fill="none" stroke="#98a39d" stroke-width="0.9"/>
<path d="M159.00 184.10H161.00" stroke="#98a39d" stroke-width="0.8"/>
<path d="M3.80 190.60H165.80V203.90H3.80A3 3 0 0 1 0.80 200.90V193.60A3 3 0 0 1 3.80 190.60Z" fill="#1c4f82"/>
<path d="M3.90 195.05H10.10L7.00 199.85Z" fill="#ffffff"/>
<path d="M15.65 192.90H25.25L20.45 202.20Z" fill="none" stroke="#c4c4c4" stroke-width="2.0" stroke-linejoin="round"/>
<text x="29.80" y="200.85" fill="#eda721" font-size="8.4" text-anchor="start" >Desk</text>
<rect x="5.10" y="205.50" width="160.70" height="13.30" fill="#122b4d" />
<path d="M9.30 209.95H15.50L12.40 214.75Z" fill="#ffffff"/>
<path d="M18.95 209.00L20.95 207.00L22.95 209.00L20.95 211.00Z" fill="#e4e4e4" stroke="#e4e4e4" stroke-width="0.5" stroke-linejoin="round"/>
<path d="M28.25 209.00L30.25 207.00L32.25 209.00L30.25 211.00Z" fill="#e4e4e4" stroke="#e4e4e4" stroke-width="0.5" stroke-linejoin="round"/>
<rect x="23.20" y="207.20" width="4.80" height="3.60" fill="#ffffff" fill-opacity="0.3"/>
<rect x="23.20" y="207.20" width="4.80" height="0.70" fill="#ffffff" fill-opacity="0.22"/>
<rect x="23.20" y="210.10" width="4.80" height="0.70" fill="#ffffff" fill-opacity="0.22"/>
<path d="M23.20 215.40L25.60 213.00L28.00 215.40L25.60 217.80Z" fill="none" stroke="#ffffff" stroke-opacity="0.72" stroke-width="1.20"/>
<text x="35.40" y="215.75" fill="#d6d6d6" font-size="8.4" text-anchor="start" >DeskAction</text>
<path d="M15.30 220.40H165.80V233.70H15.30A4 4 0 0 1 11.30 229.70V224.40A4 4 0 0 1 15.30 220.40Z" fill="#1c382e"/>
<path d="M15.85 223.55L20.85 226.85L15.85 230.15Z" fill="#ffffff"/>
<text x="27.20" y="230.65" fill="#d6d6d6" font-size="8.4" text-anchor="start" >Object Transforms</text>
<g transform="translate(123.90 222.00)"><path d="M1.6 8.3L6.0 3.9" stroke="#ffffff" stroke-width="2.7" stroke-linecap="round" fill="none"/><circle cx="6.8" cy="3.4" r="3.3" fill="#ffffff"/><rect x="-1.1" y="-4.6" width="2.2" height="4.4" fill="#1c382e" transform="translate(6.9 3.3) rotate(45)"/></g>
<rect x="139.10" y="222.70" width="8.8" height="8.6" rx="1.3" fill="#c9c9c9"/>
<path d="M140.90 226.90L142.90 228.80L146.30 225.10" fill="none" stroke="#1c382e" stroke-width="1.7"/>
<path d="M152.50 225.60A3.3 3.3 0 0 1 159.10 225.60V226.60" fill="none" stroke="#98a39d" stroke-width="0.9"/>
<rect x="156.50" y="226.60" width="7.0" height="4.4" rx="0.6" fill="none" stroke="#98a39d" stroke-width="0.9"/>
<path d="M159.00 228.80H161.00" stroke="#98a39d" stroke-width="0.8"/>
<path d="M3.80 235.30H165.80V248.60H3.80A3 3 0 0 1 0.80 245.60V238.30A3 3 0 0 1 3.80 235.30Z" fill="#1c4f82"/>
<path d="M3.90 239.75H10.10L7.00 244.55Z" fill="#ffffff"/>
<path d="M15.65 237.60H25.25L20.45 246.90Z" fill="none" stroke="#c4c4c4" stroke-width="2.0" stroke-linejoin="round"/>
<text x="29.80" y="245.55" fill="#eda721" font-size="8.4" text-anchor="start" >Floor</text>
<rect x="5.10" y="250.20" width="160.70" height="13.30" fill="#122b4d" />
<path d="M9.30 254.65H15.50L12.40 259.45Z" fill="#ffffff"/>
<path d="M18.95 253.70L20.95 251.70L22.95 253.70L20.95 255.70Z" fill="#e4e4e4" stroke="#e4e4e4" stroke-width="0.5" stroke-linejoin="round"/>
<path d="M28.25 253.70L30.25 251.70L32.25 253.70L30.25 255.70Z" fill="#e4e4e4" stroke="#e4e4e4" stroke-width="0.5" stroke-linejoin="round"/>
<rect x="23.20" y="251.90" width="4.80" height="3.60" fill="#ffffff" fill-opacity="0.3"/>
<rect x="23.20" y="251.90" width="4.80" height="0.70" fill="#ffffff" fill-opacity="0.22"/>
<rect x="23.20" y="254.80" width="4.80" height="0.70" fill="#ffffff" fill-opacity="0.22"/>
<path d="M23.20 260.10L25.60 257.70L28.00 260.10L25.60 262.50Z" fill="none" stroke="#ffffff" stroke-opacity="0.72" stroke-width="1.20"/>
<text x="35.40" y="260.45" fill="#d6d6d6" font-size="8.4" text-anchor="start" >FloorAction</text>
<path d="M15.30 265.10H165.80V278.40H15.30A4 4 0 0 1 11.30 274.40V269.10A4 4 0 0 1 15.30 265.10Z" fill="#1c382e"/>
<path d="M15.85 268.25L20.85 271.55L15.85 274.85Z" fill="#ffffff"/>
<text x="27.20" y="275.35" fill="#d6d6d6" font-size="8.4" text-anchor="start" >Object Transforms</text>
<g transform="translate(123.90 266.70)"><path d="M1.6 8.3L6.0 3.9" stroke="#ffffff" stroke-width="2.7" stroke-linecap="round" fill="none"/><circle cx="6.8" cy="3.4" r="3.3" fill="#ffffff"/><rect x="-1.1" y="-4.6" width="2.2" height="4.4" fill="#1c382e" transform="translate(6.9 3.3) rotate(45)"/></g>
<rect x="139.10" y="267.40" width="8.8" height="8.6" rx="1.3" fill="#c9c9c9"/>
<path d="M140.90 271.60L142.90 273.50L146.30 269.80" fill="none" stroke="#1c382e" stroke-width="1.7"/>
<path d="M152.50 270.30A3.3 3.3 0 0 1 159.10 270.30V271.30" fill="none" stroke="#98a39d" stroke-width="0.9"/>
<rect x="156.50" y="271.30" width="7.0" height="4.4" rx="0.6" fill="none" stroke="#98a39d" stroke-width="0.9"/>
<path d="M159.00 273.50H161.00" stroke="#98a39d" stroke-width="0.8"/>
<path d="M3.80 280.00H165.80V293.30H3.80A3 3 0 0 1 0.80 290.30V283.00A3 3 0 0 1 3.80 280.00Z" fill="#1c4f82"/>
<path d="M3.90 284.45H10.10L7.00 289.25Z" fill="#ffffff"/>
<path d="M15.65 282.30H25.25L20.45 291.60Z" fill="none" stroke="#c4c4c4" stroke-width="2.0" stroke-linejoin="round"/>
<text x="29.80" y="290.25" fill="#eda721" font-size="8.4" text-anchor="start" >Lamp Stand</text>
<rect x="5.10" y="294.90" width="160.70" height="13.30" fill="#122b4d" />
<path d="M9.30 299.35H15.50L12.40 304.15Z" fill="#ffffff"/>
<path d="M18.95 298.40L20.95 296.40L22.95 298.40L20.95 300.40Z" fill="#e4e4e4" stroke="#e4e4e4" stroke-width="0.5" stroke-linejoin="round"/>
<path d="M28.25 298.40L30.25 296.40L32.25 298.40L30.25 300.40Z" fill="#e4e4e4" stroke="#e4e4e4" stroke-width="0.5" stroke-linejoin="round"/>
<rect x="23.20" y="296.60" width="4.80" height="3.60" fill="#ffffff" fill-opacity="0.3"/>
<rect x="23.20" y="296.60" width="4.80" height="0.70" fill="#ffffff" fill-opacity="0.22"/>
<rect x="23.20" y="299.50" width="4.80" height="0.70" fill="#ffffff" fill-opacity="0.22"/>
<path d="M23.20 304.80L25.60 302.40L28.00 304.80L25.60 307.20Z" fill="none" stroke="#ffffff" stroke-opacity="0.72" stroke-width="1.20"/>
<text x="35.40" y="305.15" fill="#d6d6d6" font-size="8.4" text-anchor="start" >Lamp StandAction</text>
<path d="M15.30 309.80H165.80V323.10H15.30A4 4 0 0 1 11.30 319.10V313.80A4 4 0 0 1 15.30 309.80Z" fill="#1c382e"/>
<path d="M15.85 312.95L20.85 316.25L15.85 319.55Z" fill="#ffffff"/>
<text x="27.20" y="320.05" fill="#d6d6d6" font-size="8.4" text-anchor="start" >Object Transforms</text>
<g transform="translate(123.90 311.40)"><path d="M1.6 8.3L6.0 3.9" stroke="#ffffff" stroke-width="2.7" stroke-linecap="round" fill="none"/><circle cx="6.8" cy="3.4" r="3.3" fill="#ffffff"/><rect x="-1.1" y="-4.6" width="2.2" height="4.4" fill="#1c382e" transform="translate(6.9 3.3) rotate(45)"/></g>
<rect x="139.10" y="312.10" width="8.8" height="8.6" rx="1.3" fill="#c9c9c9"/>
<path d="M140.90 316.30L142.90 318.20L146.30 314.50" fill="none" stroke="#1c382e" stroke-width="1.7"/>
<path d="M152.50 315.00A3.3 3.3 0 0 1 159.10 315.00V316.00" fill="none" stroke="#98a39d" stroke-width="0.9"/>
<rect x="156.50" y="316.00" width="7.0" height="4.4" rx="0.6" fill="none" stroke="#98a39d" stroke-width="0.9"/>
<path d="M159.00 318.20H161.00" stroke="#98a39d" stroke-width="0.8"/>
<path d="M3.80 324.70H165.80V338.00H3.80A3 3 0 0 1 0.80 335.00V327.70A3 3 0 0 1 3.80 324.70Z" fill="#1c4f82"/>
<path d="M3.90 329.15H10.10L7.00 333.95Z" fill="#ffffff"/>
<path d="M15.65 327.00H25.25L20.45 336.30Z" fill="none" stroke="#c4c4c4" stroke-width="2.0" stroke-linejoin="round"/>
<text x="29.80" y="334.95" fill="#eda721" font-size="8.4" text-anchor="start" >Monitor</text>
<rect x="5.10" y="339.60" width="160.70" height="13.30" fill="#122b4d" />
<path d="M9.30 344.05H15.50L12.40 348.85Z" fill="#ffffff"/>
<path d="M18.95 343.10L20.95 341.10L22.95 343.10L20.95 345.10Z" fill="#e4e4e4" stroke="#e4e4e4" stroke-width="0.5" stroke-linejoin="round"/>
<path d="M28.25 343.10L30.25 341.10L32.25 343.10L30.25 345.10Z" fill="#e4e4e4" stroke="#e4e4e4" stroke-width="0.5" stroke-linejoin="round"/>
<rect x="23.20" y="341.30" width="4.80" height="3.60" fill="#ffffff" fill-opacity="0.3"/>
<rect x="23.20" y="341.30" width="4.80" height="0.70" fill="#ffffff" fill-opacity="0.22"/>
<rect x="23.20" y="344.20" width="4.80" height="0.70" fill="#ffffff" fill-opacity="0.22"/>
<path d="M23.20 349.50L25.60 347.10L28.00 349.50L25.60 351.90Z" fill="none" stroke="#ffffff" stroke-opacity="0.72" stroke-width="1.20"/>
<text x="35.40" y="349.85" fill="#d6d6d6" font-size="8.4" text-anchor="start" >MonitorAction</text>
<path d="M15.30 354.50H165.80V367.80H15.30A4 4 0 0 1 11.30 363.80V358.50A4 4 0 0 1 15.30 354.50Z" fill="#1c382e"/>
<path d="M15.85 357.65L20.85 360.95L15.85 364.25Z" fill="#ffffff"/>
<text x="27.20" y="364.75" fill="#d6d6d6" font-size="8.4" text-anchor="start" >Object Transforms</text>
<g transform="translate(123.90 356.10)"><path d="M1.6 8.3L6.0 3.9" stroke="#ffffff" stroke-width="2.7" stroke-linecap="round" fill="none"/><circle cx="6.8" cy="3.4" r="3.3" fill="#ffffff"/><rect x="-1.1" y="-4.6" width="2.2" height="4.4" fill="#1c382e" transform="translate(6.9 3.3) rotate(45)"/></g>
<rect x="139.10" y="356.80" width="8.8" height="8.6" rx="1.3" fill="#c9c9c9"/>
<path d="M140.90 361.00L142.90 362.90L146.30 359.20" fill="none" stroke="#1c382e" stroke-width="1.7"/>
<path d="M152.50 359.70A3.3 3.3 0 0 1 159.10 359.70V360.70" fill="none" stroke="#98a39d" stroke-width="0.9"/>
<rect x="156.50" y="360.70" width="7.0" height="4.4" rx="0.6" fill="none" stroke="#98a39d" stroke-width="0.9"/>
<path d="M159.00 362.90H161.00" stroke="#98a39d" stroke-width="0.8"/>
<path d="M3.80 369.40H165.80V382.70H3.80A3 3 0 0 1 0.80 379.70V372.40A3 3 0 0 1 3.80 369.40Z" fill="#1c4f82"/>
<path d="M4.30 372.55L9.50 375.75L4.30 378.95Z" fill="#ffffff"/>
<path d="M15.65 371.70H25.25L20.45 381.00Z" fill="none" stroke="#c4c4c4" stroke-width="2.0" stroke-linejoin="round"/>
<text x="29.80" y="379.65" fill="#eda721" font-size="8.4" text-anchor="start" >Pillow 1.001</text>
<path d="M4.5 23.8H144.7V37.6H4.5A3 3 0 0 1 1.5 34.6V26.8A3 3 0 0 1 4.5 23.8Z" fill="#1c1c1c" stroke="#383838" stroke-width="0.9"/>
<path d="M144.70 23.30H160.30A2.8 2.8 0 0 1 163.10 26.10V35.30A2.8 2.8 0 0 1 160.30 38.10H144.70Z" fill="#545454"/>
<circle cx="12.9" cy="29.2" r="3.8" fill="none" stroke="#cfcfcf" stroke-width="1.05"/>
<path d="M10.2 31.9L5.7 36.3" stroke="#cfcfcf" stroke-width="1.05" stroke-linecap="round"/>
<path d="M148.5 31.3H159.7M151.0 28.9L148.5 31.3L151.0 33.7M157.2 28.9L159.7 31.3L157.2 33.7" fill="none" stroke="#ececec" stroke-width="1.1" stroke-linecap="round" stroke-linejoin="round"/>
<rect x="0.00" y="0.00" width="1024.00" height="20.90" fill="#303030" />
<rect x="0.00" y="0.00" width="1024.00" height="0.80" fill="#1c1c1c" />
<path d="M0 0H4A3.2 3.2 0 0 0 0.8 3.2V21H0Z" fill="#1c1c1c"/>
<rect x="7.2" y="3.8" width="25.1" height="15.0" rx="3" fill="#272727"/>
<path d="M9.70 8.00L11.70 6.00L13.70 8.00L11.70 10.00Z" fill="#e4e4e4" stroke="#e4e4e4" stroke-width="0.5" stroke-linejoin="round"/>
<path d="M19.00 8.00L21.00 6.00L23.00 8.00L21.00 10.00Z" fill="#e4e4e4" stroke="#e4e4e4" stroke-width="0.5" stroke-linejoin="round"/>
<rect x="13.95" y="6.20" width="4.80" height="3.60" fill="#ffffff" fill-opacity="0.3"/>
<rect x="13.95" y="6.20" width="4.80" height="0.70" fill="#ffffff" fill-opacity="0.22"/>
<rect x="13.95" y="9.10" width="4.80" height="0.70" fill="#ffffff" fill-opacity="0.22"/>
<path d="M13.95 14.40L16.35 12.00L18.75 14.40L16.35 16.80Z" fill="none" stroke="#ffffff" stroke-opacity="0.72" stroke-width="1.20"/>
<path d="M25.40 11.25L27.70 13.55L30.00 11.25" fill="none" stroke="#e0e0e0" stroke-width="1.1" stroke-linecap="round" stroke-linejoin="round"/>
<rect x="37.9" y="3.8" width="104.4" height="15.0" rx="3" fill="#272727"/>
<path d="M40.20 8.00L42.20 6.00L44.20 8.00L42.20 10.00Z" fill="#e4e4e4" stroke="#e4e4e4" stroke-width="0.5" stroke-linejoin="round"/>
<path d="M49.50 8.00L51.50 6.00L53.50 8.00L51.50 10.00Z" fill="#e4e4e4" stroke="#e4e4e4" stroke-width="0.5" stroke-linejoin="round"/>
<rect x="44.45" y="6.20" width="4.80" height="3.60" fill="#ffffff" fill-opacity="0.3"/>
<rect x="44.45" y="6.20" width="4.80" height="0.70" fill="#ffffff" fill-opacity="0.22"/>
<rect x="44.45" y="9.10" width="4.80" height="0.70" fill="#ffffff" fill-opacity="0.22"/>
<path d="M44.45 14.40L46.85 12.00L49.25 14.40L46.85 16.80Z" fill="none" stroke="#ffffff" stroke-opacity="0.72" stroke-width="1.20"/>
<text x="58.80" y="14.85" fill="#e2e2e2" font-size="8.4" text-anchor="start" >Dope Sheet</text>
<path d="M135.30 10.90L137.60 13.30L139.90 10.90" fill="none" stroke="#e0e0e0" stroke-width="1.05" stroke-linecap="round" stroke-linejoin="round"/>
<text x="153.70" y="14.85" fill="#dcdcdc" font-size="8.4" text-anchor="start" >View</text>
<text x="187.20" y="14.85" fill="#dcdcdc" font-size="8.4" text-anchor="start" >Select</text>
<text x="226.30" y="14.85" fill="#dcdcdc" font-size="8.4" text-anchor="start" >Marker</text>
<text x="267.60" y="14.85" fill="#dcdcdc" font-size="8.4" text-anchor="start" >Channel</text>
<text x="315.60" y="14.85" fill="#dcdcdc" font-size="8.4" text-anchor="start" >Key</text>
<path d="M797.1 3.85H809.3V19H797.1A3 3 0 0 1 794.1 16V6.85A3 3 0 0 1 797.1 3.85Z" fill="#4772b3"/>
<rect x="809.30" y="3.85" width="17.20" height="15.15" fill="#545454" />
<path d="M826.50 3.85H839.60A3 3 0 0 1 842.60 6.85V16.00A3 3 0 0 1 839.60 19.00H826.50Z" fill="#545454"/>
<line x1="809.5" y1="3.85" x2="809.5" y2="19" stroke="#404040" stroke-width="0.7"/>
<line x1="826.5" y1="3.85" x2="826.5" y2="19" stroke="#404040" stroke-width="0.7"/>
<path d="M797.3 6.9L806.9 10.8L802.9 12.3L801.4 16.7Z" fill="#ffffff" stroke="#ffffff" stroke-width="0.5" stroke-linejoin="round"/>
<path d="M812.5 9.4V6.6H815.5M820.5 6.6H823.5V9.4M823.5 13.6V16.4H820.5M815.5 16.4H812.5V13.6" fill="none" stroke="#e4e4e4" stroke-width="1.2"/>
<rect x="814.6" y="8.5" width="6.8" height="6.2" fill="none" stroke="#a8a8a8" stroke-width="0.8" stroke-dasharray="1.7 1.1"/>
<path d="M834.6 6.9L839.7 16.1H829.5Z" fill="#e2e2e2" stroke="#e2e2e2" stroke-width="1.5" stroke-linejoin="round"/>
<path d="M834.6 8.6V13.2" stroke="#4e4e4e" stroke-width="1.35"/><circle cx="834.6" cy="15.0" r="0.8" fill="#4e4e4e"/>
<rect x="848.0" y="4.0" width="25.1" height="14.9" rx="3" fill="#272727"/>
<path d="M850.2 6.7H860.6L856.5 11.6V14.2L853.9 16.3V11.6Z" fill="none" stroke="#e8e8e8" stroke-width="0.85" stroke-linejoin="round"/>
<path d="M865.70 11.05L868.00 13.15L870.30 11.05" fill="none" stroke="#e0e0e0" stroke-width="1.2" stroke-linecap="round" stroke-linejoin="round"/>
<rect x="878.4" y="4.0" width="95.1" height="14.9" rx="3" fill="#272727"/>
<text x="884.60" y="15.00" fill="#e2e2e2" font-size="8.4" text-anchor="start" textLength="62" lengthAdjust="spacing">Nearest Frame</text>
<path d="M966.20 10.90L968.60 13.30L971.00 10.90" fill="none" stroke="#e0e0e0" stroke-width="1.15" stroke-linecap="round" stroke-linejoin="round"/>
<path d="M982.1 4.1H994.1V18.9H982.1A3 3 0 0 1 979.1 15.9V7.1A3 3 0 0 1 982.1 4.1Z" fill="#545454"/>
<circle cx="986.5" cy="11.6" r="5.0" fill="none" stroke="#6c6c6c" stroke-width="0.9"/><circle cx="986.5" cy="11.6" r="1.65" fill="#dedede"/>
<path d="M994.10 4.10H1017.30A3 3 0 0 1 1020.30 7.10V15.90A3 3 0 0 1 1017.30 18.90H994.10Z" fill="#2c2c2c"/>
<path d="M998.2 16.6C1002.9 16.2 1001.6 6.5 1004.1 6.5C1006.6 6.5 1005.3 16.2 1010.0 16.6" fill="none" stroke="#969696" stroke-width="1.0"/>
<path d="M1013.20 11.05L1015.50 13.55L1017.80 11.05" fill="none" stroke="#5e5e5e" stroke-width="1.1" stroke-linecap="round" stroke-linejoin="round"/>
<rect x="1022.40" y="31.00" width="1.60" height="405.00" fill="#ffffff" fill-opacity="0.06"/>
<rect x="0.00" y="21.00" width="0.80" height="423.00" fill="#191919" />
</svg>
</body></html>
